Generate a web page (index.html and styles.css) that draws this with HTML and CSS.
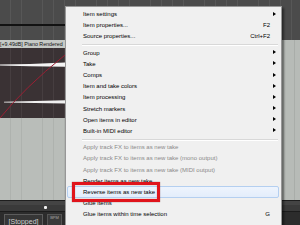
FILE: index.html
```html
<!DOCTYPE html>
<html>
<head>
<meta charset="utf-8">
<link rel="stylesheet" href="styles.css">
</head>
<body>
<div class="screen">
  <div class="top-band"><div class="black-line"></div></div>
  <div class="mid">
    <div class="left-track">
      <div class="item-label"><span>[+9.49dB] Piano Rendered</span></div>
      <div class="wave">
        <svg class="wave-svg" width="65" height="70" viewBox="0 0 65 70">
          <path d="M0,16.6 L30,16 L65,14.6 L65,18.8 L30,18.2 L0,17.4 Z" fill="#f4f4f4"/>
          <path d="M4,53.8 L35,53 L65,52.2 L65,55.4 L35,55 L4,54.6 Z" fill="#f0f0f0"/>
          <path d="M0,70 Q24,40 65,7" fill="none" stroke="#9a1f33" stroke-width="1"/>
        </svg>
      </div>
      <div class="lane"></div>
    </div>
    <div class="right-lane"></div>
  </div>
  <div class="scroll-bar"><div class="scroll-dot"></div></div>
  <div class="transport">
    <div class="btn-stopped">[Stopped]</div>
    <div class="btn-bpm">BPM</div>
  </div>
</div>

<div class="menu">
  <div class="row"><span class="label">Item settings</span><span class="arrow"></span></div>
  <div class="row"><span class="label">Item properties...</span><span class="key">F2</span><span class="noarrow"></span></div>
  <div class="row"><span class="label">Source properties...</span><span class="key">Ctrl+F2</span><span class="noarrow"></span></div>
  <div class="sep"></div>
  <div class="row"><span class="label">Group</span><span class="arrow"></span></div>
  <div class="row"><span class="label">Take</span><span class="arrow"></span></div>
  <div class="row"><span class="label">Comps</span><span class="arrow"></span></div>
  <div class="row"><span class="label">Item and take colors</span><span class="arrow"></span></div>
  <div class="row"><span class="label">Item processing</span><span class="arrow"></span></div>
  <div class="row"><span class="label">Stretch markers</span><span class="arrow"></span></div>
  <div class="row"><span class="label">Open items in editor</span><span class="arrow"></span></div>
  <div class="row"><span class="label">Built-in MIDI editor</span><span class="arrow"></span></div>
  <div class="sep"></div>
  <div class="row disabled"><span class="label">Apply track FX to items as new take</span></div>
  <div class="row disabled"><span class="label">Apply track FX to items as new take (mono output)</span></div>
  <div class="row disabled"><span class="label">Apply track FX to items as new take (MIDI output)</span></div>
  <div class="row"><span class="label">Render items as new take</span></div>
  <div class="row hl"><span class="label">Reverse items as new take</span></div>
  <div class="row"><span class="label">Glue items</span></div>
  <div class="row"><span class="label">Glue items within time selection</span><span class="key">G</span><span class="noarrow"></span></div>
</div>

<div class="annot"></div>
</body>
</html>
```

FILE: styles.css
```css
html, body {
  margin: 0;
  padding: 0;
}
body {
  width: 300px;
  height: 225px;
  overflow: hidden;
  position: relative;
  font-family: "Liberation Sans", Arial, sans-serif;
  background: #2a2a2a;
}
.screen {
  display: flex;
  flex-direction: column;
  width: 300px;
  height: 225px;
}
.top-band {
  height: 40px;
  background-color: #4b4b4b;
  background-image: repeating-linear-gradient(to right, transparent 0, transparent 10px, #575757 10px, #575757 10.8px);
  display: flex;
  flex-direction: column;
}
.black-line {
  margin-top: 24px;
  width: 65px;
  height: 2px;
  background: #121212;
}
.mid {
  height: 160px;
  display: flex;
}
.left-track {
  width: 65px;
  display: flex;
  flex-direction: column;
}
.item-label {
  height: 8px;
  background: #c6cac6;
  display: flex;
  align-items: center;
  overflow: hidden;
  white-space: nowrap;
}
.item-label span {
  font-size: 5.3px;
  color: #111;
  line-height: 8px;
}
.wave {
  height: 70px;
  background-color: #3a3234;
  background-image: repeating-linear-gradient(to right, transparent 0, transparent 10px, #463e40 10px, #463e40 10.8px);
}
.wave-svg {
  display: block;
}
.lane {
  flex: 1;
  background-color: #b9bdb9;
  background-image: repeating-linear-gradient(to right, transparent 0, transparent 10px, #aeb2ae 10px, #aeb2ae 10.8px);
}
.right-lane {
  flex: 1;
  background-color: #b7bbb7;
  background-image: repeating-linear-gradient(to right, transparent 0, transparent 2px, #a9ada9 2px, #a9ada9 3px, transparent 3px, transparent 10.8px);
}
.scroll-bar {
  height: 12px;
  background: linear-gradient(to bottom, #1e1e1e 0, #1e1e1e 1px, #444 1px, #444 5px, #3a3a3a 5px, #3a3a3a 11px, #1c1c1c 11px);
  display: flex;
  align-items: center;
  padding-left: 44px;
}
.scroll-dot {
  width: 3px;
  height: 3px;
  background: #f2f2f2;
  border-radius: 1px;
  margin-top: 2px;
}
.transport {
  height: 13px;
  background: #2c2c2c;
  display: flex;
  gap: 4px;
  padding: 2px 0 0 4px;
  box-sizing: border-box;
}
.btn-stopped {
  width: 39px;
  height: 14px;
  border: 1px solid #5c5c5c;
  background: #363636;
  color: #cfcfcf;
  font-size: 7px;
  text-align: center;
  line-height: 13px;
  box-sizing: border-box;
}
.btn-bpm {
  width: 15px;
  height: 14px;
  border: 1px solid #555;
  background: #3a3a3a;
  color: #a8a8a8;
  font-size: 4px;
  text-align: center;
  line-height: 6px;
  box-sizing: border-box;
}

/* context menu */
.menu {
  position: absolute;
  left: 65px;
  top: 6px;
  width: 217px;
  box-sizing: border-box;
  background: #f0f0f0;
  border: 1px solid #979797;
  box-shadow: 2px 2px 2px rgba(0, 0, 0, 0.45);
  padding: 1.5px 0 12px 0;
  font-size: 6px;
  color: #000;
}
.row {
  height: 11.2px;
  display: flex;
  align-items: center;
  padding: 0 5px 0 17px;
  white-space: nowrap;
}
.row .label {
  flex: 1;
}
.row .key {
  color: #000;
}
.row .arrow {
  width: 6px;
  height: 5px;
  display: flex;
  justify-content: flex-end;
  box-sizing: border-box;
  border-left: 3px solid transparent;
}
.row .arrow::after {
  content: "";
  width: 0;
  height: 0;
  border-left: 3px solid #000;
  border-top: 2.5px solid transparent;
  border-bottom: 2.5px solid transparent;
}
.row .noarrow {
  width: 6px;
}
.row.disabled {
  color: #8a8a8a;
}
.row.hl {
  margin: 0 2px 0 1px;
  padding-left: 15px;
  background: linear-gradient(to bottom, #eef4fd, #e3edfb);
  border: 1px solid #b4cff0;
  border-radius: 2px;
  box-sizing: border-box;
  height: 12.2px;
  margin-top: -0.5px;
  margin-bottom: -0.5px;
}
.sep {
  height: 5px;
  margin: 0 3px 0 16px;
  background: linear-gradient(to bottom, transparent 0, transparent 2px, #d8d8d8 2px, #d8d8d8 3px, #ffffff 3px, #ffffff 4px, transparent 4px);
}

/* red annotation box */
.annot {
  position: absolute;
  left: 72px;
  top: 182px;
  width: 88px;
  height: 20px;
  box-sizing: border-box;
  border: 3px solid #e0141c;
  box-shadow: 0 0 1px rgba(80, 0, 0, 0.6), inset 0 0 1px rgba(80, 0, 0, 0.6);
}
```
